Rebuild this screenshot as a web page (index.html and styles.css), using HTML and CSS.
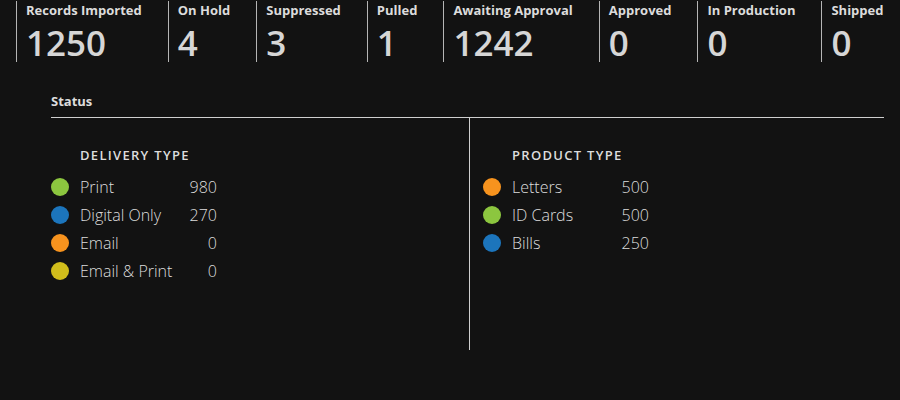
FILE: index.html
```html
<!DOCTYPE html>
<html lang="en">
  <head>
    <meta charset="UTF-8" />
    <title>Job Status</title>
    <link rel="stylesheet" href="styles.css">
  </head>
  <body>
    <!-- counters across the top -->
    <div class="stats">
      <div class="stat"><div class="stat-label">Records Imported</div><div class="stat-value">1250</div></div>
      <div class="stat"><div class="stat-label">On Hold</div><div class="stat-value">4</div></div>
      <div class="stat"><div class="stat-label">Suppressed</div><div class="stat-value">3</div></div>
      <div class="stat"><div class="stat-label">Pulled</div><div class="stat-value">1</div></div>
      <div class="stat"><div class="stat-label">Awaiting Approval</div><div class="stat-value">1242</div></div>
      <div class="stat"><div class="stat-label">Approved</div><div class="stat-value">0</div></div>
      <div class="stat"><div class="stat-label">In Production</div><div class="stat-value">0</div></div>
      <div class="stat"><div class="stat-label">Shipped</div><div class="stat-value">0</div></div>
    </div>

    <div class="status">
      <div class="status-title">Status</div>
      <div class="status-body">
        <div class="breakdown breakdown-left">
          <table class="legend">
            <tr><th></th><th colspan="2">DELIVERY TYPE</th></tr>
            <tr><td><span class="dot green"></span></td><td>Print</td><td class="num">980</td></tr>
            <tr><td><span class="dot blue"></span></td><td>Digital Only</td><td class="num">270</td></tr>
            <tr><td><span class="dot orange"></span></td><td>Email</td><td class="num">0</td></tr>
            <tr><td><span class="dot yellow"></span></td><td>Email &amp; Print</td><td class="num">0</td></tr>
          </table>
        </div>
        <div class="breakdown breakdown-right">
          <table class="legend">
            <tr><th></th><th colspan="2">PRODUCT TYPE</th></tr>
            <tr><td><span class="dot orange"></span></td><td>Letters</td><td class="num">500</td></tr>
            <tr><td><span class="dot green"></span></td><td>ID Cards</td><td class="num">500</td></tr>
            <tr><td><span class="dot blue"></span></td><td>Bills</td><td class="num">250</td></tr>
          </table>
        </div>
      </div>
    </div>
  </body>
</html>
```

FILE: styles.css
```css
body,
html {
  margin: 0;
  padding: 0;
}
body {
  background-color: #121212;
  color: #dddddd;
  font-family: "Open Sans", "Liberation Sans", sans-serif;
  height: 400px;
  overflow: hidden;
}
/* top row of counters */
.stats {
  display: flex;
  padding: 1px 0 0 16px;
}
.stat {
  border-left: 1px solid #b5b5b5;
  padding: 0 26px 0 9px;
  height: 61px;
  white-space: nowrap;
}
.stat-label {
  font-size: 13px;
  font-weight: 700;
  line-height: 16px;
  margin: 1px 0 6px;
  color: #dcdcdc;
}
.stat-value {
  font-size: 35px;
  font-weight: 600;
  line-height: 38px;
  color: #d6d6d6;
}
/* status panel */
.status {
  margin: 31px 0 0 51px;
  width: 833px;
}
.status-title {
  font-size: 13px;
  font-weight: 700;
  line-height: 17px;
  padding-bottom: 7px;
  border-bottom: 1px solid #cfcfcf;
}
.status-body {
  display: flex;
  height: 232px;
}
.breakdown {
  padding-top: 27px;
}
.breakdown-left {
  width: 418px;
  border-right: 1px solid #cfcfcf;
}
.breakdown-right {
  padding-left: 13px;
}
.legend {
  border-collapse: collapse;
  width: 166px;
  font-size: 16px;
  font-weight: 300;
}
.legend th {
  text-align: left;
  font-size: 13px;
  font-weight: 600;
  letter-spacing: 1.3px;
  height: 20px;
  padding: 0 0 8px;
}
.legend td {
  height: 28px;
  padding: 0;
}
.legend td:first-child {
  width: 29px;
}
.legend .num {
  text-align: right;
}
.dot {
  display: block;
  width: 18px;
  height: 18px;
  border-radius: 50%;
}
.green { background-color: #8cc63f; }
.blue { background-color: #1c75bc; }
.orange { background-color: #f7931e; }
.yellow { background-color: #d1bd1b; }
```
